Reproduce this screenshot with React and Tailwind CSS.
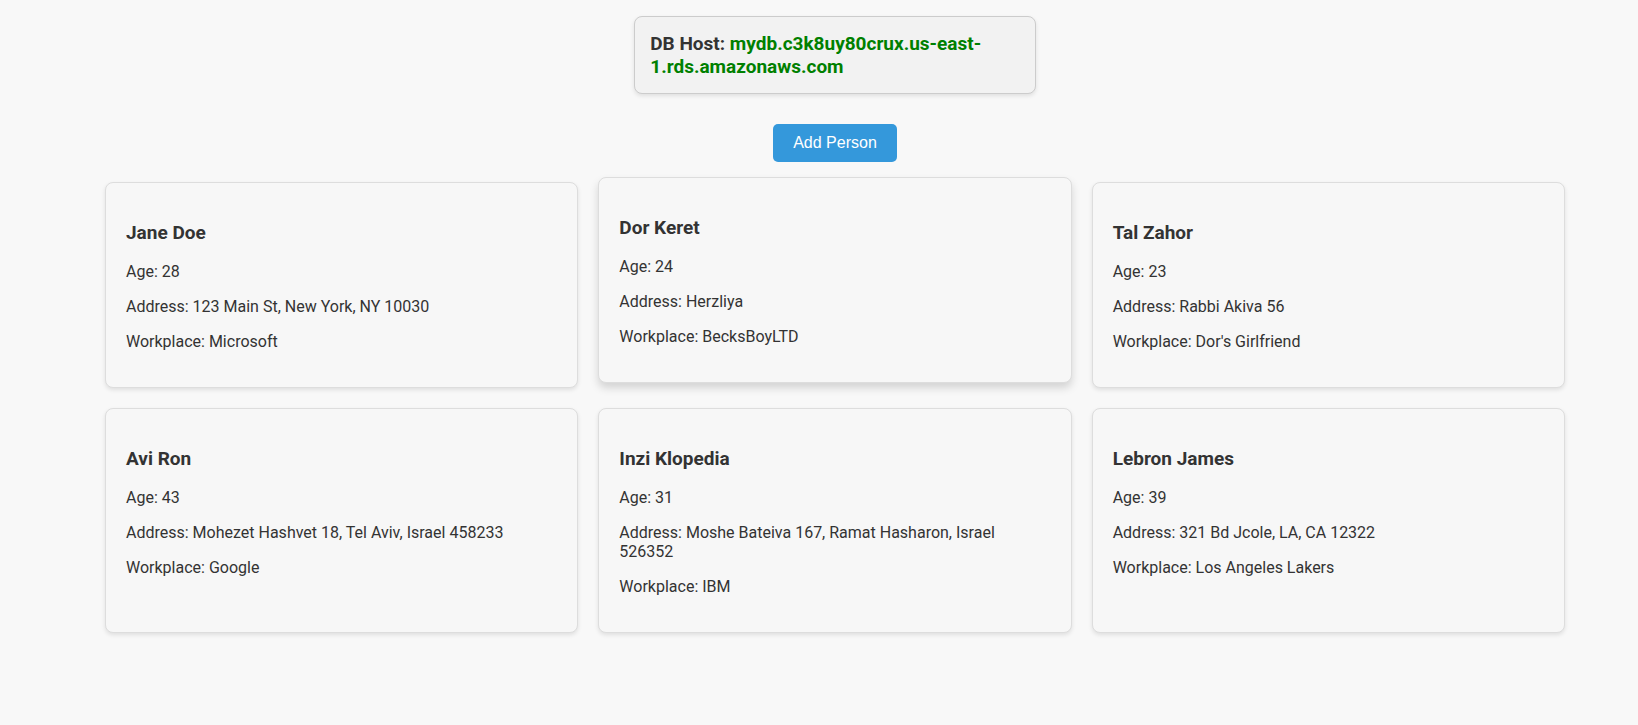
const people = [
  { name: "Jane Doe", age: 28, address: "123 Main St, New York, NY 10030", workplace: "Microsoft" },
  { name: "Dor Keret", age: 24, address: "Herzliya", workplace: "BecksBoyLTD", raised: true },
  { name: "Tal Zahor", age: 23, address: "Rabbi Akiva 56", workplace: "Dor's Girlfriend" },
  { name: "Avi Ron", age: 43, address: "Mohezet Hashvet 18, Tel Aviv, Israel 458233", workplace: "Google" },
  { name: "Inzi Klopedia", age: 31, address: "Moshe Bateiva 167, Ramat Hasharon, Israel 526352", workplace: "IBM" },
  { name: "Lebron James", age: 39, address: "321 Bd Jcole, LA, CA 12322", workplace: "Los Angeles Lakers" },
];

function PersonCard({ person }) {
  const lift = person.raised
    ? "-translate-y-[5px] shadow-[0_5px_8px_rgba(0,0,0,0.15)]"
    : "shadow-[0_2px_4px_rgba(0,0,0,0.1)]";
  return (
    <li className={`rounded-lg border border-[#dddddd] bg-[#f7f7f7] px-5 pt-[39px] pb-9 ${lift}`}>
      <h3 className="mb-[18px] text-[19px] leading-[22px] font-bold">{person.name}</h3>
      <div className="flex flex-col gap-4 text-base leading-[19px]">
        <p>Age: {person.age}</p>
        <p>Address: {person.address}</p>
        <p>Workplace: {person.workplace}</p>
      </div>
    </li>
  );
}

export default function App() {
  return (
    <div className="flex min-h-screen flex-col items-center bg-[#f8f8f8] py-4 pl-8 font-[Roboto,sans-serif] text-[#333333]">
      <header className="w-1/4 min-w-72 rounded-lg border border-[#cccccc] bg-[#f2f2f2] p-[15px] shadow-[0_2px_4px_rgba(0,0,0,0.1)]">
        <h3 className="text-[19px] leading-[23px] font-bold">
          DB Host: <span className="text-[#008000]">mydb.c3k8uy80crux.us-east-1.rds.amazonaws.com</span>
        </h3>
      </header>
      <main className="flex w-full max-w-[1500px] flex-col items-center px-5 pt-[30px]">
        <button
          type="button"
          className="rounded-[5px] bg-[#3498db] px-5 py-[10px] font-['Liberation_Sans',Arial,sans-serif] text-base leading-[18px] text-white"
        >
          Add Person
        </button>
        <ul className="mt-5 grid w-full grid-cols-1 gap-5 md:grid-cols-3">
          {people.map((person) => (
            <PersonCard key={person.name} person={person} />
          ))}
        </ul>
      </main>
    </div>
  );
}
